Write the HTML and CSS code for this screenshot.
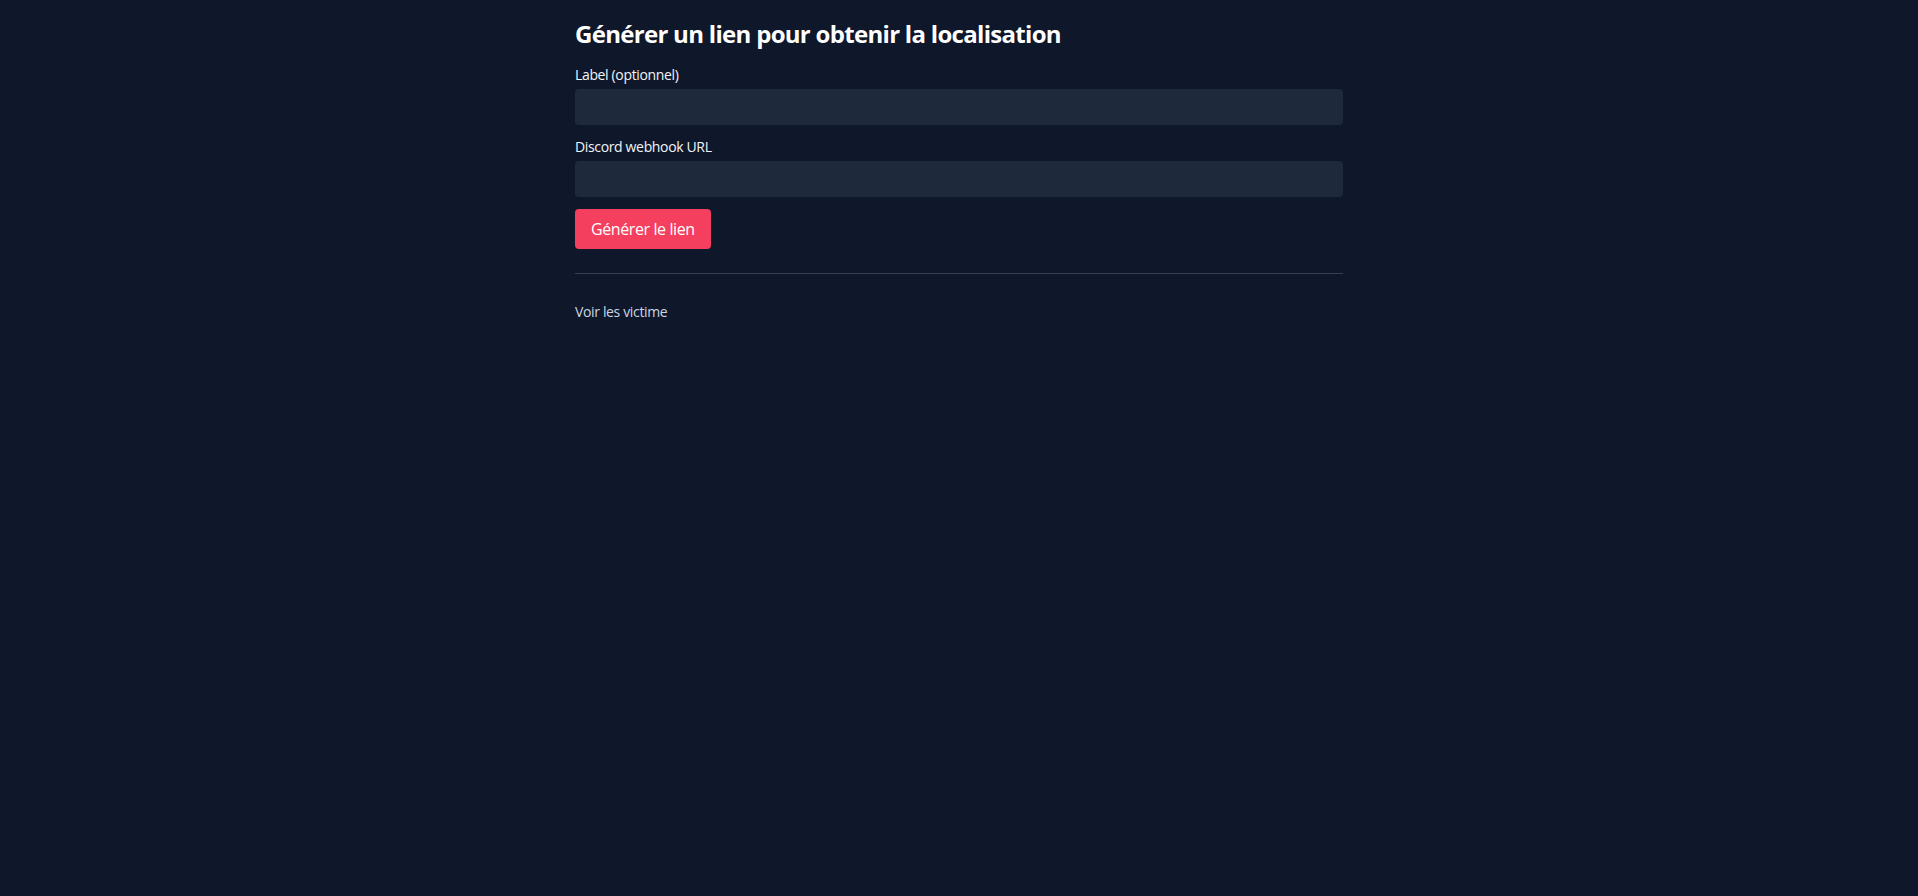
FILE: index.html
```html
<!DOCTYPE html>
<html lang="fr">
<head>
<meta charset="utf-8">
<title>Générer un lien</title>
<link rel="stylesheet" href="styles.css">
</head>
<body>
<main class="container">
  <h1 class="title">Générer un lien pour obtenir la localisation</h1>
  <form class="form">
    <div class="field">
      <label class="label" for="label">Label (optionnel)</label>
      <input class="input" id="label" type="text">
    </div>
    <div class="field">
      <label class="label" for="webhook">Discord webhook URL</label>
      <input class="input" id="webhook" type="text">
    </div>
    <div class="actions">
      <button class="btn" type="button">Générer le lien</button>
    </div>
  </form>
  <hr class="divider">
  <a class="link" href="#">Voir les victime</a>
</main>
</body>
</html>
```

FILE: styles.css
```css
* { box-sizing: border-box; }
html, body { margin: 0; padding: 0; }
body {
  background: #0f172a;
  color: #f1f5f9;
  font-family: "Open Sans", "Noto Sans", sans-serif;
  letter-spacing: -0.35px;
  min-height: 100vh;
}
.container {
  max-width: 770px;
  margin: 0 auto;
  padding: 18px 1px;
}
.title {
  margin: 0 0 15px;
  font-size: 24px;
  line-height: 32px;
  font-weight: 700;
  letter-spacing: -0.7px;
  color: #ffffff;
}
.form { display: flex; flex-direction: column; gap: 12px; }
.field { display: flex; flex-direction: column; gap: 4px; }
.label {
  font-size: 14px;
  line-height: 20px;
  color: #f1f5f9;
}
.input {
  display: block;
  width: 100%;
  height: 36px;
  border: 0;
  border-radius: 4px;
  background: #1e293b;
  color: #f1f5f9;
  padding: 8px 12px;
  font: inherit;
  font-size: 14px;
  outline: none;
}
.actions { display: flex; }
.btn {
  background: #f43f5e;
  color: #ffffff;
  border: 0;
  border-radius: 4px;
  height: 40px;
  padding: 0 16px;
  font-family: inherit;
  font-size: 16px;
  line-height: 24px;
  letter-spacing: -0.4px;
  cursor: pointer;
}
.divider {
  border: 0;
  border-top: 1px solid #334155;
  margin: 24px 0 26px;
}
.link {
  font-size: 14px;
  line-height: 20px;
  color: #cbd5e1;
  text-decoration: none;
}
```
